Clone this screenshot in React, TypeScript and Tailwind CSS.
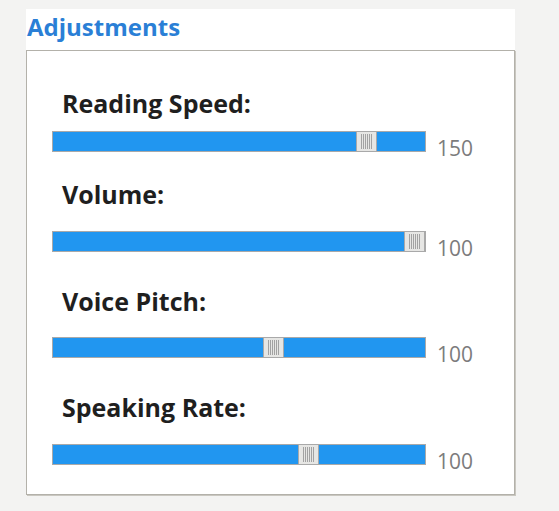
import React from 'react';

type Setting = { label: string; value: number; pos: number; labelGap: string; rowGap: string };

const settings: Setting[] = [
  { label: 'Reading Speed:', value: 150, pos: 0.864, labelGap: 'mt-[13px]', rowGap: 'mt-0' },
  { label: 'Volume:', value: 100, pos: 1, labelGap: 'mt-[22px]', rowGap: 'mt-[27px]' },
  { label: 'Voice Pitch:', value: 100, pos: 0.6, labelGap: 'mt-[21px]', rowGap: 'mt-[34px]' },
  { label: 'Speaking Rate:', value: 100, pos: 0.7, labelGap: 'mt-[22px]', rowGap: 'mt-[34px]' },
];

const Thumb: React.FC<{ pos: number }> = ({ pos }) => (
  <div
    className="absolute -top-px flex h-[21px] w-[21px] items-center justify-center gap-px border border-[#a9a9a9] bg-[#e6e6e4]"
    style={{ left: `calc(${pos} * (100% - 20px) - 1px)` }}
  >
    {[0, 1, 2, 3, 4, 5].map((i) => (
      <span key={i} className="h-[15px] w-px bg-[#a2a2a2]" />
    ))}
  </div>
);

const App: React.FC = () => {
  return (
    <div className="min-h-screen bg-[#f3f3f2] pl-[26px] pt-[9px]" style={{ fontFamily: '"Open Sans", "Noto Sans", sans-serif' }}>
      <div className="w-[489px] bg-white">
        <h2 className="h-[41px] pl-[1px] text-[24px] font-bold leading-[36px] text-[#2a7fd6]">Adjustments</h2>
        <div className="h-[445px] border border-[#b3b1aa] bg-white pl-[25px] pt-[37px] shadow-[1px_1px_0_#c9c7c0]">
          {settings.map((s) => (
            <div key={s.label} className={s.rowGap}>
              <div className="pl-[10px] text-[25px] font-bold leading-[30px] text-[#1f1f1f]">{s.label}</div>
              <div className={`flex h-[21px] items-start ${s.labelGap}`}>
                <div className="relative h-[21px] w-[374px] shrink-0 border border-[#a9a9a9] bg-[#2196f0]">
                  <Thumb pos={s.pos} />
                </div>
                <span className="ml-[11px] mt-[6px] text-[21px] leading-[22px] text-[#7c7c7c]">{s.value}</span>
              </div>
            </div>
          ))}
        </div>
      </div>
    </div>
  );
};

export default App;
